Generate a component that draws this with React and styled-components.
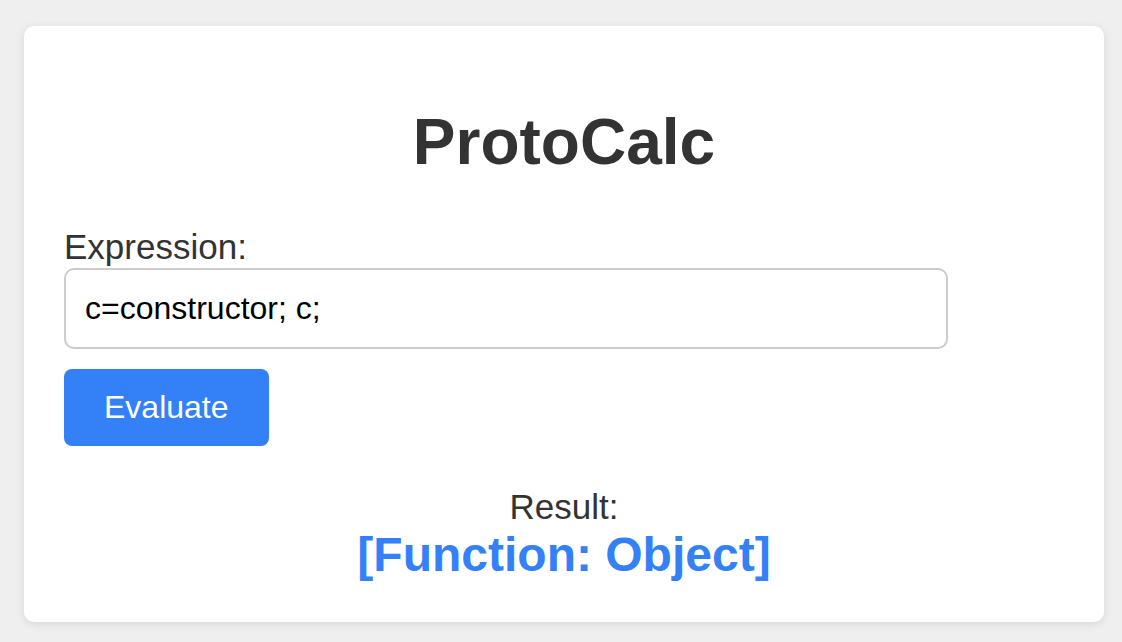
import React, { useState } from 'react';
import styled, { createGlobalStyle } from 'styled-components';

const GlobalStyle = createGlobalStyle`
  html, body {
    margin: 0;
    padding: 0;
    background: #efefef;
    font-family: 'Liberation Sans', Arial, Helvetica, sans-serif;
  }
`;

const Page = styled.div`
  padding: 26px 18px 20px 24px;
`;

const Card = styled.div`
  width: 1080px;
  box-sizing: border-box;
  background: #fff;
  border-radius: 10px;
  box-shadow: 0 2px 10px rgba(0, 0, 0, 0.1);
  padding: 79px 40px 40px;
`;

const Title = styled.h1`
  margin: 0 0 48px;
  text-align: center;
  font-size: 64px;
  font-weight: 700;
  color: #333;
`;

const Label = styled.label`
  display: block;
  margin-bottom: 1px;
  font-size: 35px;
  color: #333;
`;

const Input = styled.input`
  display: block;
  width: 884px;
  box-sizing: border-box;
  padding: 20px 19px;
  border: 2px solid #ccc;
  border-radius: 10px;
  font-family: inherit;
  font-size: 32px;
  color: #000;
  outline: none;
`;

const Button = styled.button`
  display: block;
  margin-top: 20px;
  padding: 20px 40px;
  border: none;
  border-radius: 8px;
  background: #3380f7;
  color: #fff;
  font-family: inherit;
  font-size: 32px;
  cursor: pointer;
`;

const Result = styled.div`
  margin-top: 41px;
  text-align: center;
`;

const ResultLabel = styled.div`
  font-size: 35px;
  color: #333;
`;

const ResultValue = styled.div`
  font-size: 48px;
  font-weight: 700;
  color: #3380f7;
`;

const App = () => {
  const [expr, setExpr] = useState('c=constructor; c;');

  return (
    <Page>
      <GlobalStyle />
      <Card>
        <Title>ProtoCalc</Title>
        <Label htmlFor="expr">Expression:</Label>
        <Input id="expr" value={expr} onChange={(e) => setExpr(e.target.value)} />
        <Button>Evaluate</Button>
        <Result>
          <ResultLabel>Result:</ResultLabel>
          <ResultValue>[Function: Object]</ResultValue>
        </Result>
      </Card>
    </Page>
  );
};

export default App;
